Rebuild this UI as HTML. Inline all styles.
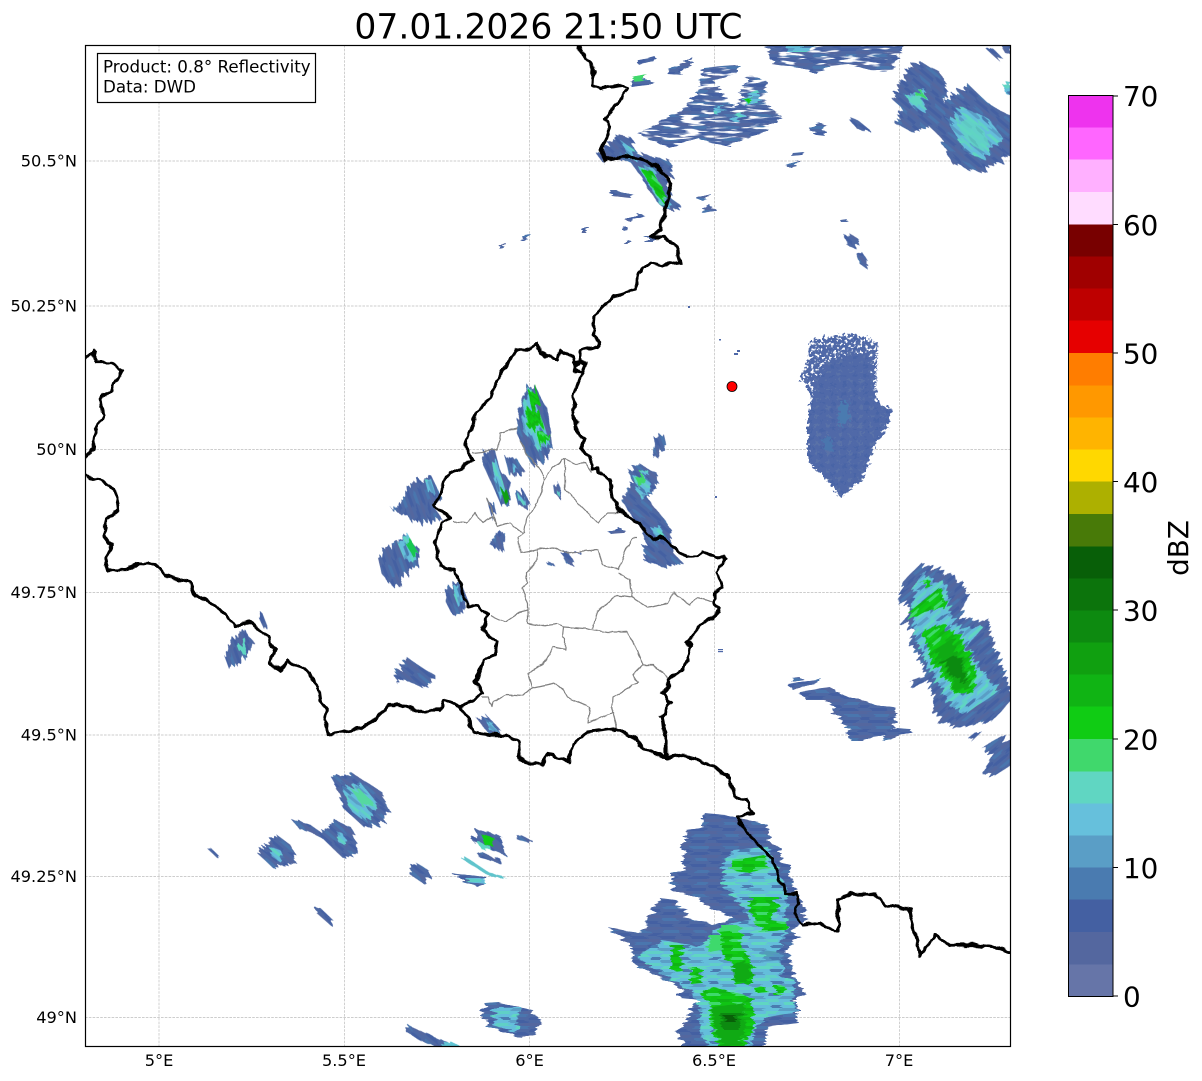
<!DOCTYPE html>
<html><head><meta charset="utf-8"><title>Radar</title>
<style>
html,body{margin:0;padding:0;background:#fff;width:1202px;height:1081px;overflow:hidden}
svg{display:block;overflow:hidden}
text{font-family:"DejaVu Sans","Liberation Sans",sans-serif;fill:#000}
.g{stroke:#bdbdbd;stroke-width:.7;stroke-dasharray:2.6 1.2;fill:none}
.bd{fill:none;stroke:#000;stroke-width:3.2;stroke-linejoin:round;stroke-linecap:round}
.pr{fill:none;stroke:#808080;stroke-width:1.2;stroke-linejoin:round}
.b0{fill:url(#b0)}.b4{fill:url(#b4)}.bm{fill:url(#bm)}.b9{fill:url(#b9)}
.c0{fill:url(#c0)}.c4{fill:url(#c4)}.cm{fill:url(#cm)}.c9{fill:url(#c9)}
.gr0{fill:url(#g0)}.gr4{fill:url(#g4)}.grm{fill:url(#gm)}
.dk{fill:#10aa14}.dd{fill:#0c8a10}
.l{font-size:16.2px}
.cb{font-size:27.8px}
</style></head><body>
<svg width="1202" height="1081" viewBox="0 0 1202 1081" xmlns="http://www.w3.org/2000/svg">
<defs>
<clipPath id="ax"><rect x="85" y="45" width="925" height="1001"/></clipPath>
<pattern id="b0" width="30" height="12" patternUnits="userSpaceOnUse"><rect width="30" height="12" fill="#4e69a4"/><rect x="0" y="0" width="16" height="3" fill="#4460a2"/><rect x="14" y="3" width="16" height="3" fill="#54679f"/><rect x="4" y="6" width="14" height="3" fill="#4a76ae"/><rect x="20" y="9" width="10" height="3" fill="#4460a2"/></pattern>
<pattern id="b4" href="#b0" patternTransform="rotate(40)"/>
<pattern id="bm" href="#b0" patternTransform="rotate(-40)"/>
<pattern id="b9" href="#b0" patternTransform="rotate(70)"/>
<pattern id="c0" width="30" height="12" patternUnits="userSpaceOnUse"><rect width="30" height="12" fill="#64bedb"/><rect x="0" y="0" width="14" height="3" fill="#5a9ec6"/><rect x="16" y="3" width="14" height="3" fill="#60d0c6"/><rect x="3" y="6" width="16" height="3" fill="#60d6c2"/><rect x="20" y="9" width="10" height="3" fill="#4a7bb0"/></pattern>
<pattern id="c4" href="#c0" patternTransform="rotate(40)"/>
<pattern id="cm" href="#c0" patternTransform="rotate(-40)"/>
<pattern id="c9" href="#c0" patternTransform="rotate(70)"/>
<pattern id="g0" width="24" height="9" patternUnits="userSpaceOnUse"><rect width="24" height="9" fill="#10c414"/><rect y="0" width="12" height="3" fill="#10b414"/><rect x="12" y="3" width="12" height="3" fill="#3ed96c"/><rect x="2" y="6" width="16" height="3" fill="#10cc14"/></pattern>
<pattern id="g4" href="#g0" patternTransform="rotate(40)"/>
<pattern id="gm" href="#g0" patternTransform="rotate(-40)"/>
<pattern id="bl" width="11" height="9" patternUnits="userSpaceOnUse"><rect width="11" height="9" fill="#5069a8"/><rect x="1" y="1" width="4" height="3" fill="#5a72a8"/><rect x="6" y="5" width="4" height="3" fill="#4864a6"/></pattern>
<filter id="rows" x="-5%" y="-5%" width="110%" height="110%" color-interpolation-filters="sRGB">
<feTurbulence type="fractalNoise" baseFrequency=".03 .33" numOctaves="2" seed="7" result="n"/>
<feColorMatrix in="n" type="matrix" values="1 0 0 0 0 0 0 0 0 .5 0 0 0 0 0 0 0 0 0 1" result="m"/>
<feDisplacementMap in="SourceGraphic" in2="m" scale="16" xChannelSelector="R" yChannelSelector="G"/>
</filter>
<filter id="holes" x="-5%" y="-5%" width="110%" height="110%" color-interpolation-filters="sRGB">
<feTurbulence type="fractalNoise" baseFrequency=".05 .3" numOctaves="2" seed="3" result="n"/>
<feColorMatrix in="n" type="matrix" values="0 0 0 0 0 0 0 0 0 0 0 0 0 0 0 10 0 0 0 -3.5" result="a"/>
<feComposite in="SourceGraphic" in2="a" operator="in"/>
</filter>
<filter id="spk" x="-10%" y="-10%" width="120%" height="120%" color-interpolation-filters="sRGB">
<feTurbulence type="fractalNoise" baseFrequency=".35" numOctaves="2" seed="5" result="n"/>
<feDisplacementMap in="SourceGraphic" in2="n" scale="11" xChannelSelector="R" yChannelSelector="G" result="d"/>
<feColorMatrix in="n" type="matrix" values="0 0 0 0 0 0 0 0 0 0 0 0 0 0 0 12 0 0 0 -4.2" result="a"/>
<feComposite in="d" in2="a" operator="in"/>
</filter>
<filter id="nz" x="-10%" y="-10%" width="120%" height="120%" color-interpolation-filters="sRGB">
<feTurbulence type="fractalNoise" baseFrequency=".3" numOctaves="2" seed="9" result="n"/>
<feDisplacementMap in="SourceGraphic" in2="n" scale="10" xChannelSelector="R" yChannelSelector="G"/>
</filter>
<filter id="wig" x="-2%" y="-2%" width="104%" height="104%" color-interpolation-filters="sRGB">
<feTurbulence type="fractalNoise" baseFrequency=".09" numOctaves="2" seed="11" result="n"/>
<feDisplacementMap in="SourceGraphic" in2="n" scale="7" xChannelSelector="R" yChannelSelector="G"/>
</filter>
<filter id="wig2" x="-2%" y="-2%" width="104%" height="104%" color-interpolation-filters="sRGB">
<feTurbulence type="fractalNoise" baseFrequency=".09" numOctaves="2" seed="4" result="n"/>
<feDisplacementMap in="SourceGraphic" in2="n" scale="4" xChannelSelector="R" yChannelSelector="G"/>
</filter>
</defs>
<rect width="1202" height="1081" fill="#fff"/>
<text x="548.500" y="38.500" text-anchor="middle" style="font-size:34.6px">07.01.2026 21:50 UTC</text>
<g class="g">
<path d="M159 45V1046M344.500 45V1046M529.500 45V1046M714.500 45V1046M899.500 45V1046"/>
<path d="M85 161H1010M85 306H1010M85 449.500H1010M85 592.500H1010M85 735H1010M85 876.500H1010M85 1017.500H1010"/>
</g>
<g clip-path="url(#ax)">

<!-- horizontal-row echoes -->
<g filter="url(#rows)">
<g filter="url(#holes)">
<polygon class="b0" points="762,40 908,40 897,58 890,72 870,70 850,64 830,66 815,74 800,68 775,64"/>
<polygon class="b0" points="640,133 663,120 688,105 700,87 703,68 737,65 737,73 715,80 725,100 738,108 742,90 750,75 768,82 763,98 770,108 780,118 763,133 737,142 727,147 710,143 697,138 670,148 657,142 642,137"/>
</g>
<polygon class="c0" points="782,45 812,45 808,52 790,52"/>
<polygon class="c0" points="716,105 722,105 725,112 716,115"/><polygon class="c0" points="742,98 758,90 760,100 748,106"/>
<polygon class="c0" points="733,115 745,112 740,122 732,122"/>
<polygon points="744,100 750,97 748,104" fill="#10cc14"/>
<polygon class="b0" points="638,60 655,56 655,61 640,65"/><polygon class="b0" points="667,70 680,64 692,57 690,65 680,75 670,74"/>
<polygon class="b0" points="632,80 648,78 650,85 632,87"/>
<polygon points="632,77 645,74 644,80 634,82" fill="#40d86c"/>
<polygon class="b0" points="811,130 820,122 827,126 822,136 812,135"/>
<polygon class="b0" points="788,165 797,160 797,166 790,168"/><polygon class="b0" points="791,153 802,152 803,155 792,156"/>
<polygon class="b0" points="698,197 708,194 708,199 700,201"/><polygon class="b0" points="702,209 711,204 714,211 703,213"/>
<polygon class="b0" points="647,236 654,236 654,242 647,242"/>
<polygon class="b0" points="610,190 616,190 633,195 628,198 612,196"/><polygon class="b0" points="625,220 640,213 643,216 628,222"/>
<polygon class="b0" points="620,228 626,226 626,230 620,231"/><polygon class="b0" points="625,241 630,240 630,244 626,244"/>
<polygon class="b0" points="500,244 504,243 504,248 500,249"/><polygon class="b0" points="523,235 528,234 527,241 523,241"/><polygon class="b0" points="584,227 588,227 588,233 584,233"/>
<polygon class="b0" points="842,220 848,219 848,222 842,222"/>
<polygon class="b0" points="610,531 617,527 624,533 612,534"/>
<polygon class="b0" points="789,678 800,677 802,680 792,682"/>
<polygon class="b0" points="789,684 815,680 820,678 818,682 792,690"/>
<polygon class="b0" points="797,692 830,687 842,695 860,700 878,705 895,708 896,720 890,732 870,738 862,741 850,741 845,725 835,715 830,700 810,700"/>
<polygon class="b0" points="880,734 895,728 910,729 912,732 900,735 885,741"/>
<polygon class="b0" points="483,1003 498,1002 530,1010 540,1020 537,1033 523,1038 490,1027 482,1017"/>
<polygon class="c0" points="495,1007 520,1007 517,1033 493,1025"/>
<polygon class="b0" points="455,873 485,877 480,887 463,882"/>
<polygon class="c0" points="465,878 485,878 483,884 468,882"/>
<!-- south storm -->
<polygon class="b0" points="703,813 727,815 762,823 770,830 770,843 780,847 782,863 790,865 792,887 803,903 805,922 790,930 798,937 788,947 792,970 795,978 805,994 797,997 797,1023 767,1027 765,1050 687,1050 677,1033 688,1017 698,1000 680,998 680,987 660,977 650,973 632,962 633,950 625,940 608,927 637,933 647,928 648,917 660,898 678,900 677,908 687,910 685,917 713,925 722,922 733,918 715,910 697,898 672,890 672,873 682,870 683,843 687,830 703,827"/>
<polygon class="c0" points="733,850 767,847 777,867 787,900 787,927 780,947 783,977 793,980 795,1013 767,1017 755,1027 753,1050 710,1050 700,1033 700,1007 690,990 660,973 637,957 663,940 700,947 713,933 730,923 750,920 740,903 733,897 723,883 723,863"/>
<polygon points="760,950 785,952 785,960 765,962" fill="#4a7bb0" opacity=".6"/>
<polygon class="gr0" points="732,860 765,855 768,868 745,873 732,870"/>
<polygon class="gr0" points="750,897 777,897 777,910 770,920 788,922 785,930 762,932 755,920 750,910"/>
<polygon points="723,925 738,925 742,935 720,938" fill="#3ed96c"/>
<polygon points="710,935 722,935 722,950 708,952" fill="#3ed96c"/>
<polygon class="gr0" points="722,932 740,930 743,950 752,960 752,985 745,983 735,985 733,965 722,955"/>
<polygon class="gr0" points="700,993 713,987 750,997 753,1013 753,1030 743,1050 720,1050 710,1023 710,1003"/>
<polygon class="gr0" points="672,945 683,945 682,950 684,970 672,972"/>
<polygon class="gr0" points="691,968 700,967 702,983 691,984"/>
<polygon class="gr0" points="753,988 765,986 765,992 755,993"/>
<polygon class="gr0" points="775,985 785,985 784,995 776,995"/>
<polygon class="dk" points="732,965 745,960 752,975 745,982 735,982"/>
<polygon class="dk" points="711,1007 743,1003 745,1030 740,1045 722,1045 715,1030"/>
<polygon class="dd" points="720,1013 740,1013 739,1030 722,1030"/>
<rect x="724" y="1015" width="11" height="7" fill="#085f08"/>
</g>

<!-- +40 rows -->
<g transform="rotate(40 600 500)" filter="url(#rows)"><g transform="rotate(-40 600 500)">
<polygon class="b4" points="913,63 900,83 893,100 902,108 893,122 913,133 930,127 940,137 950,162 980,173 1010,157 1015,118 988,103 967,83 957,92 943,103 948,90 940,72 923,63"/>
<polygon class="b4" points="598,155 617,135 632,138 635,152 670,160 673,172 667,185 673,200 683,207 667,210 660,205 650,192 640,175 630,162 612,158 603,163"/>
<polygon class="b4" points="847,117 860,122 870,130 866,132 855,127"/>
<polygon class="b4" points="843,238 850,234 860,240 856,248 848,246"/><polygon class="b4" points="857,255 862,252 869,262 867,269 860,264"/>
<polygon class="b4" points="985,48 990,46 1002,58 998,60"/><polygon class="b4" points="1000,42 1008,42 1012,54 1005,53"/>
<polygon class="c4" points="948,120 963,107 990,120 1003,137 983,160 963,150"/>
<polygon class="c4" points="907,97 923,87 927,112 915,110"/>
<polygon class="c4" points="620,140 632,148 636,160 628,158"/>
<polygon class="c4" points="637,165 653,168 663,192 672,205 662,207 645,178"/>
<polygon class="c4" points="1003,85 1012,82 1012,96 1005,93"/>
<polygon points="958,122 970,118 985,132 990,147 978,150 962,135" fill="#60d6c2" opacity=".75"/>
<polygon points="912,98 921,92 924,105 916,106" fill="#60d6c2"/>
<polygon points="915,92 921,89 923,96 917,97" fill="#40d86c"/>
<polygon class="gr4" points="640,167 653,172 668,198 662,202 650,185"/>
<!-- Luxembourg-east storm -->
<polygon class="b4" points="640,464 657,473 657,487 647,497 658,512 667,522 673,540 672,552 683,563 663,567 643,560 645,543 640,527 620,500 630,487 630,470"/>
<polygon class="c4" points="652,528 660,525 664,535 656,540"/>
<polygon class="c4" points="634,478 648,470 650,490 642,500 636,490"/>
<polygon points="637,475 643,472 643,485 639,487" fill="#40d86c"/>
<polygon class="b4" points="560,552 567,551 574,562 568,565"/><polygon class="b4" points="547,563 552,562 555,567 549,566"/><polygon class="b4" points="577,552 582,552 578,556"/>
<polygon class="b4" points="397,670 408,658 435,675 425,687 405,680 395,682"/>
<polygon class="b4" points="477,718 487,715 500,730 490,735"/>
<polygon class="c4" points="484,718 490,720 497,731 490,731"/>
<!-- south-west -->
<polygon class="b4" points="332,777 352,773 382,792 390,812 380,825 365,828 343,808 340,797"/>
<polygon class="b4" points="335,820 352,828 355,840 359,853 343,858 322,838 298,828 292,820 307,822 322,833"/>
<polygon class="b4" points="277,835 293,847 295,863 273,868 257,853 270,840"/>
<polygon class="b4" points="415,862 432,873 425,885 408,873"/>
<polygon class="b4" points="478,828 503,838 505,855 473,842"/>
<polygon class="b4" points="477,853 482,852 502,860 501,863 480,858"/>
<polygon class="c4" points="343,790 360,782 377,803 367,823 350,810"/>
<polygon class="c4" points="335,830 345,835 345,845 338,842"/>
<polygon class="c4" points="270,845 280,850 280,862 270,855"/>
<polygon points="352,790 362,791 373,802 360,805" fill="#56d8a0"/>
<polygon points="484,834 494,838 492,846 482,843" fill="#10cc14"/>
<polygon points="480,842 490,846 488,850 480,848" fill="#60d6c2"/>
<polygon points="209,850 211,848 219,856 217,858" class="b4"/>
<polygon points="314,911 318,906 334,921 330,925" class="b4"/>
<polygon points="514,837 516,834 533,841 531,844" class="b4"/>
<polygon points="462,859 464,856 489,872 505,877 504,879 487,875" fill="#60c4cc"/>
<polygon points="406,1032 410,1026 430,1035 450,1043 448,1050 428,1044" class="b4"/>
<polygon points="443,1042 452,1042 460,1046 460,1050 443,1050" fill="#60c4d4"/>
</g></g>

<!-- -40 rows -->
<g transform="rotate(-40 900 650)" filter="url(#rows)"><g transform="rotate(40 900 650)">
<polygon class="bm" points="920,564 947,572 960,583 969,595 960,617 988,622 995,647 1008,683 1014,697 993,720 960,728 942,723 933,710 933,693 923,667 910,643 913,630 903,622 912,607 898,602 905,580"/>
<polygon class="bm" points="908,683 930,674 932,678 914,687"/>
<polygon class="bm" points="983,747 1000,737 1014,743 1014,763 993,777 982,773 992,757"/>
<polygon class="bm" points="968,738 978,730 980,733 972,741"/>
<polygon class="cm" points="922,573 947,587 950,613 960,628 983,627 967,647 987,677 1000,690 967,713 952,707 937,683 920,650 913,633 913,612 913,587"/>
<polygon class="grm" points="908,613 940,587 947,607 930,610 913,618"/>
<polygon class="grm" points="922,580 928,580 932,586 925,588"/>
<polygon class="grm" points="923,630 943,625 963,640 977,673 973,693 955,693 943,677 930,657"/>
<polygon class="dk" points="935,650 950,640 965,665 972,688 955,690"/>
<polygon class="dd" points="942,660 958,655 968,683 952,678"/>
</g></g>

<!-- steep rows (west of the radar) -->
<g transform="rotate(70 450 500)" filter="url(#rows)"><g transform="rotate(-70 450 500)">
<polygon class="b9" points="528,387 534,385 548,410 552,447 542,462 532,466 518,437 517,420 522,400"/>
<polygon class="c9" points="523,405 531,388 537,408 544,425 550,445 538,450 522,428"/>
<polygon class="gr0" points="529,395 536,387 540,402 534,410 540,413 544,428 534,430 526,424 526,411 531,408"/>
<polygon class="gr0" points="537,435 550,433 548,442 540,447"/>
<polygon class="b9" points="483,450 495,450 500,470 510,480 510,505 501,505 490,480 483,465"/>
<polygon class="c9" points="492,462 497,462 505,490 500,500 494,480"/>
<polygon points="501,490 506,488 510,500 505,503" fill="#0f9e14"/>
<polygon class="b9" points="505,457 515,457 526,473 519,477 508,472"/>
<polygon class="c9" points="512,462 518,470 513,472"/>
<polygon class="b9" points="515,493 522,490 530,502 526,510 518,505"/>
<polygon class="c9" points="518,494 525,498 524,506 519,502"/>
<polygon class="b9" points="488,503 494,502 496,513 491,516"/>
<polygon class="b9" points="492,540 498,530 505,533 504,548 506,555 496,548 490,546"/>
<polygon class="b9" points="553,485 558,483 562,492 560,497 555,495"/>
<polygon class="c9" points="556,487 560,492 557,494"/>
<polygon class="b9" points="654,438 664,435 667,447 660,454 653,457"/>
<polygon class="b9" points="400,503 412,482 432,478 442,497 433,507 443,520 417,523 400,513 391,510"/>
<polygon class="c9" points="425,480 432,482 436,495 428,492"/>
<polygon class="b9" points="377,555 405,535 420,550 418,565 405,575 395,590 382,575"/>
<polygon class="c9" points="397,542 408,535 418,552 413,562 404,558"/>
<polygon points="406,545 411,540 418,552 413,556" fill="#18c850"/>
<polygon class="b9" points="445,590 460,580 468,600 465,612 452,615 445,600"/>
<polygon class="c9" points="452,590 458,585 464,604 458,606"/>
<polygon class="b9" points="224,655 232,640 243,630 254,640 248,654 236,666 228,666"/>
<polygon points="237,646 246,640 246,652 240,654" fill="#60d6c2"/>
<polygon class="b9" points="257,613 262,612 268,628 264,629"/>
</g></g>

<!-- speckled storm -->
<polygon filter="url(#spk)" points="811,340 850,333 878,342 876,395 860,415 815,405 806,385 800,378 808,362" fill="url(#bl)"/>
<g filter="url(#nz)">
<polygon points="826,362 868,352 874,385 876,400 892,410 888,425 875,445 862,480 840,498 828,480 808,462 808,415 815,385" fill="url(#bl)"/>
<polygon points="838,408 848,400 850,420 840,428" fill="#4a7bb0"/>
<polygon points="822,440 830,436 834,450 826,452" fill="#4a76ae"/>
</g>
<g fill="#4e68a8"><rect x="688" y="306" width="2" height="2"/><rect x="719" y="339" width="2" height="1.500"/><rect x="734" y="353" width="4" height="2"/><rect x="737" y="350" width="3" height="2"/><rect x="715" y="496" width="2" height="2"/><rect x="718" y="649" width="5" height="1.200"/><rect x="718" y="651" width="5" height="1.200"/></g>

<!-- province lines -->
<g class="pr" filter="url(#wig2)">
<path d="M472,453 482,452 498,450 500,433 517,428"/>
<path d="M520,440 527,455 538,467 545,480 537,503 527,520 525,533 518,537 520,553"/>
<path d="M453,522 467,523 475,512 483,523 492,517 497,527 510,523 523,533"/>
<path d="M497,527 490,508 487,498"/>
<path d="M545,480 552,468 565,458 577,464 585,463 592,473"/>
<path d="M565,458 565,490 582,507 598,523 608,513 618,513"/>
<path d="M520,553 537,550 552,547 567,553 583,551 598,550 603,565 618,570 627,548 633,538 638,538"/>
<path d="M618,573 630,580 632,597"/>
<path d="M538,550 538,560 527,573 527,583 522,588 528,603 528,623 543,626 557,624 563,627 592,629 608,632 627,632 637,650 643,665 653,665 668,678"/>
<path d="M490,615 505,622 520,612 528,610"/>
<path d="M592,628 597,612 617,595 632,597 648,607 668,603 673,593 690,605 697,597 715,603"/>
<path d="M563,627 562,637 565,639 565,650 553,647 543,665 528,673 532,688 523,696 507,695 493,702 492,707 488,697 482,697"/>
<path d="M532,688 555,683 563,690 567,697 590,707 588,723 613,713 617,728"/>
<path d="M612,713 613,697 633,685 638,683 633,675 643,665"/>
</g>
<!-- national borders -->
<g class="bd" filter="url(#wig)">
<path d="M578,42 585,58 594,68 593,85 600,88 620,85 629,87 622,98 613,108 605,118 610,128 600,150 605,160 620,157 640,158 655,165 668,178 670,195 665,210 660,230 650,238 665,238 675,245 680,262 665,265 650,262 640,272 635,290 615,296 605,305 594,316 592,335 600,343 597,346 582,350 580,360 573,370 582,372 578,383 573,397 574,408 572,415 577,423 578,435 583,438 582,450 590,457 593,468 598,468 600,473 610,480 612,497 617,507 633,520 643,527 648,535 653,540 660,537 667,540 677,550 687,557 697,557 703,551 717,558 722,557 725,560 720,567 717,573 722,587 715,593 715,603 720,608 715,615 700,627 687,642 692,647 683,668 668,680 668,688 662,693 670,703 662,717 666,737 666,757"/>
<path d="M580,360 573,363 575,371 582,372 585,363 580,360"/>
<path d="M666,757 653,753 640,745 632,737 617,728 588,732 573,743 567,762 557,757 547,755 543,765 525,762 520,758 518,740 507,735 490,735 473,732 468,720 460,708"/>
<path d="M460,708 483,693 475,682 485,660 495,655 497,642 482,630 488,615 477,605 467,605 455,570 440,566 435,543 442,522 450,518 435,505 448,473 463,466 472,460 465,445 478,412 490,398 493,387 517,350 538,345 540,353 557,360 560,350 573,357 575,363"/>
<path d="M460,708 443,700 440,710 428,710 420,712 400,705 390,705 375,720 360,728 335,733 330,735 325,720 328,712 320,700 318,685 305,670 288,660 280,670 270,662 275,650 262,630 250,622 235,625 215,605 195,595 190,582 165,576 155,564 140,563 125,570 108,570 105,560 112,545 105,535 105,520 118,510 115,490 100,480 82,475"/>
<path d="M82,362 92,352 97,362 112,362 122,370 112,390 100,400 103,415 95,430 92,450 82,460"/>
<path d="M666,757 680,755 700,760 716,768 730,780 735,795 745,800 752,812 738,817 748,833 773,860 777,873 785,893 797,893 798,903 793,913 802,925 820,923 838,932 838,900 850,893 875,893 885,905 910,910 915,935 920,955 935,935 950,945 975,945 1000,948 1014,953"/>
</g>
</g>
<circle cx="732" cy="386.500" r="5" fill="#f00" stroke="#000" stroke-width=".8"/>
<rect x="85.500" y="45.500" width="925" height="1001" fill="none" stroke="#000" stroke-width="1.200"/>
<!-- info box -->
<rect x="97.500" y="53.500" width="218" height="49" fill="#fff" stroke="#000" stroke-width="1.200"/>
<text x="103" y="72.500" style="font-size:16.7px">Product: 0.8° Reflectivity</text>
<text x="103" y="92.500" style="font-size:16.7px">Data: DWD</text>
<!-- axis labels -->
<g class="l" text-anchor="end">
<text x="77" y="166.500">50.5°N</text><text x="77" y="311.500">50.25°N</text><text x="77" y="455">50°N</text><text x="77" y="598">49.75°N</text><text x="77" y="740.500">49.5°N</text><text x="77" y="882">49.25°N</text><text x="77" y="1023">49°N</text>
</g>
<g class="l" text-anchor="middle">
<text x="159" y="1066">5°E</text><text x="344" y="1066">5.5°E</text><text x="529.500" y="1066">6°E</text><text x="714" y="1066">6.5°E</text><text x="899" y="1066">7°E</text>
</g>
<!-- colorbar -->
<g>
<rect x="1068" y="964" width="45" height="32.500" fill="#6675a8"/><rect x="1068" y="932" width="45" height="32.500" fill="#54679f"/><rect x="1068" y="899" width="45" height="33" fill="#4460a2"/><rect x="1068" y="867" width="45" height="32.500" fill="#4a7bb0"/><rect x="1068" y="835" width="45" height="32.500" fill="#5a9ec6"/><rect x="1068" y="803" width="45" height="32.500" fill="#66c0dc"/><rect x="1068" y="771" width="45" height="32.500" fill="#60d6c2"/><rect x="1068" y="739" width="45" height="32.500" fill="#40d86c"/><rect x="1068" y="706" width="45" height="33" fill="#10cc14"/><rect x="1068" y="674" width="45" height="32.500" fill="#10b414"/><rect x="1068" y="642" width="45" height="32.500" fill="#10a010"/><rect x="1068" y="610" width="45" height="32.500" fill="#0d8a10"/><rect x="1068" y="578" width="45" height="32.500" fill="#0c740c"/><rect x="1068" y="546" width="45" height="32.500" fill="#085f08"/><rect x="1068" y="514" width="45" height="32.500" fill="#487a08"/><rect x="1068" y="481" width="45" height="33" fill="#adb000"/><rect x="1068" y="449" width="45" height="32.500" fill="#ffd800"/><rect x="1068" y="417" width="45" height="32.500" fill="#ffb400"/><rect x="1068" y="385" width="45" height="32.500" fill="#ff9800"/><rect x="1068" y="353" width="45" height="32.500" fill="#ff7d00"/><rect x="1068" y="320" width="45" height="33" fill="#e60000"/><rect x="1068" y="288" width="45" height="32.500" fill="#be0000"/><rect x="1068" y="256" width="45" height="32.500" fill="#a00000"/><rect x="1068" y="224" width="45" height="32.500" fill="#780000"/><rect x="1068" y="192" width="45" height="32.500" fill="#ffdcff"/><rect x="1068" y="159" width="45" height="33" fill="#ffb0ff"/><rect x="1068" y="127" width="45" height="32.500" fill="#ff66ff"/><rect x="1068" y="95.500" width="45" height="32" fill="#ee33ee"/>
<rect x="1068.500" y="95.500" width="44.500" height="901" fill="none" stroke="#000" stroke-width="1"/>
<path d="M1113 96H1118M1113 224.500H1118M1113 353H1118M1113 481.500H1118M1113 610H1118M1113 739H1118M1113 867.500H1118M1113 996H1118" stroke="#000" stroke-width="1"/>
</g>
<g class="cb">
<text x="1123" y="106">70</text><text x="1123" y="235">60</text><text x="1123" y="363.500">50</text><text x="1123" y="492">40</text><text x="1123" y="620.500">30</text><text x="1123" y="749.500">20</text><text x="1123" y="878">10</text><text x="1123" y="1006.500">0</text>
</g>
<text class="cb" transform="translate(1188,548) rotate(-90)" text-anchor="middle">dBZ</text>
</svg>
</body></html>
